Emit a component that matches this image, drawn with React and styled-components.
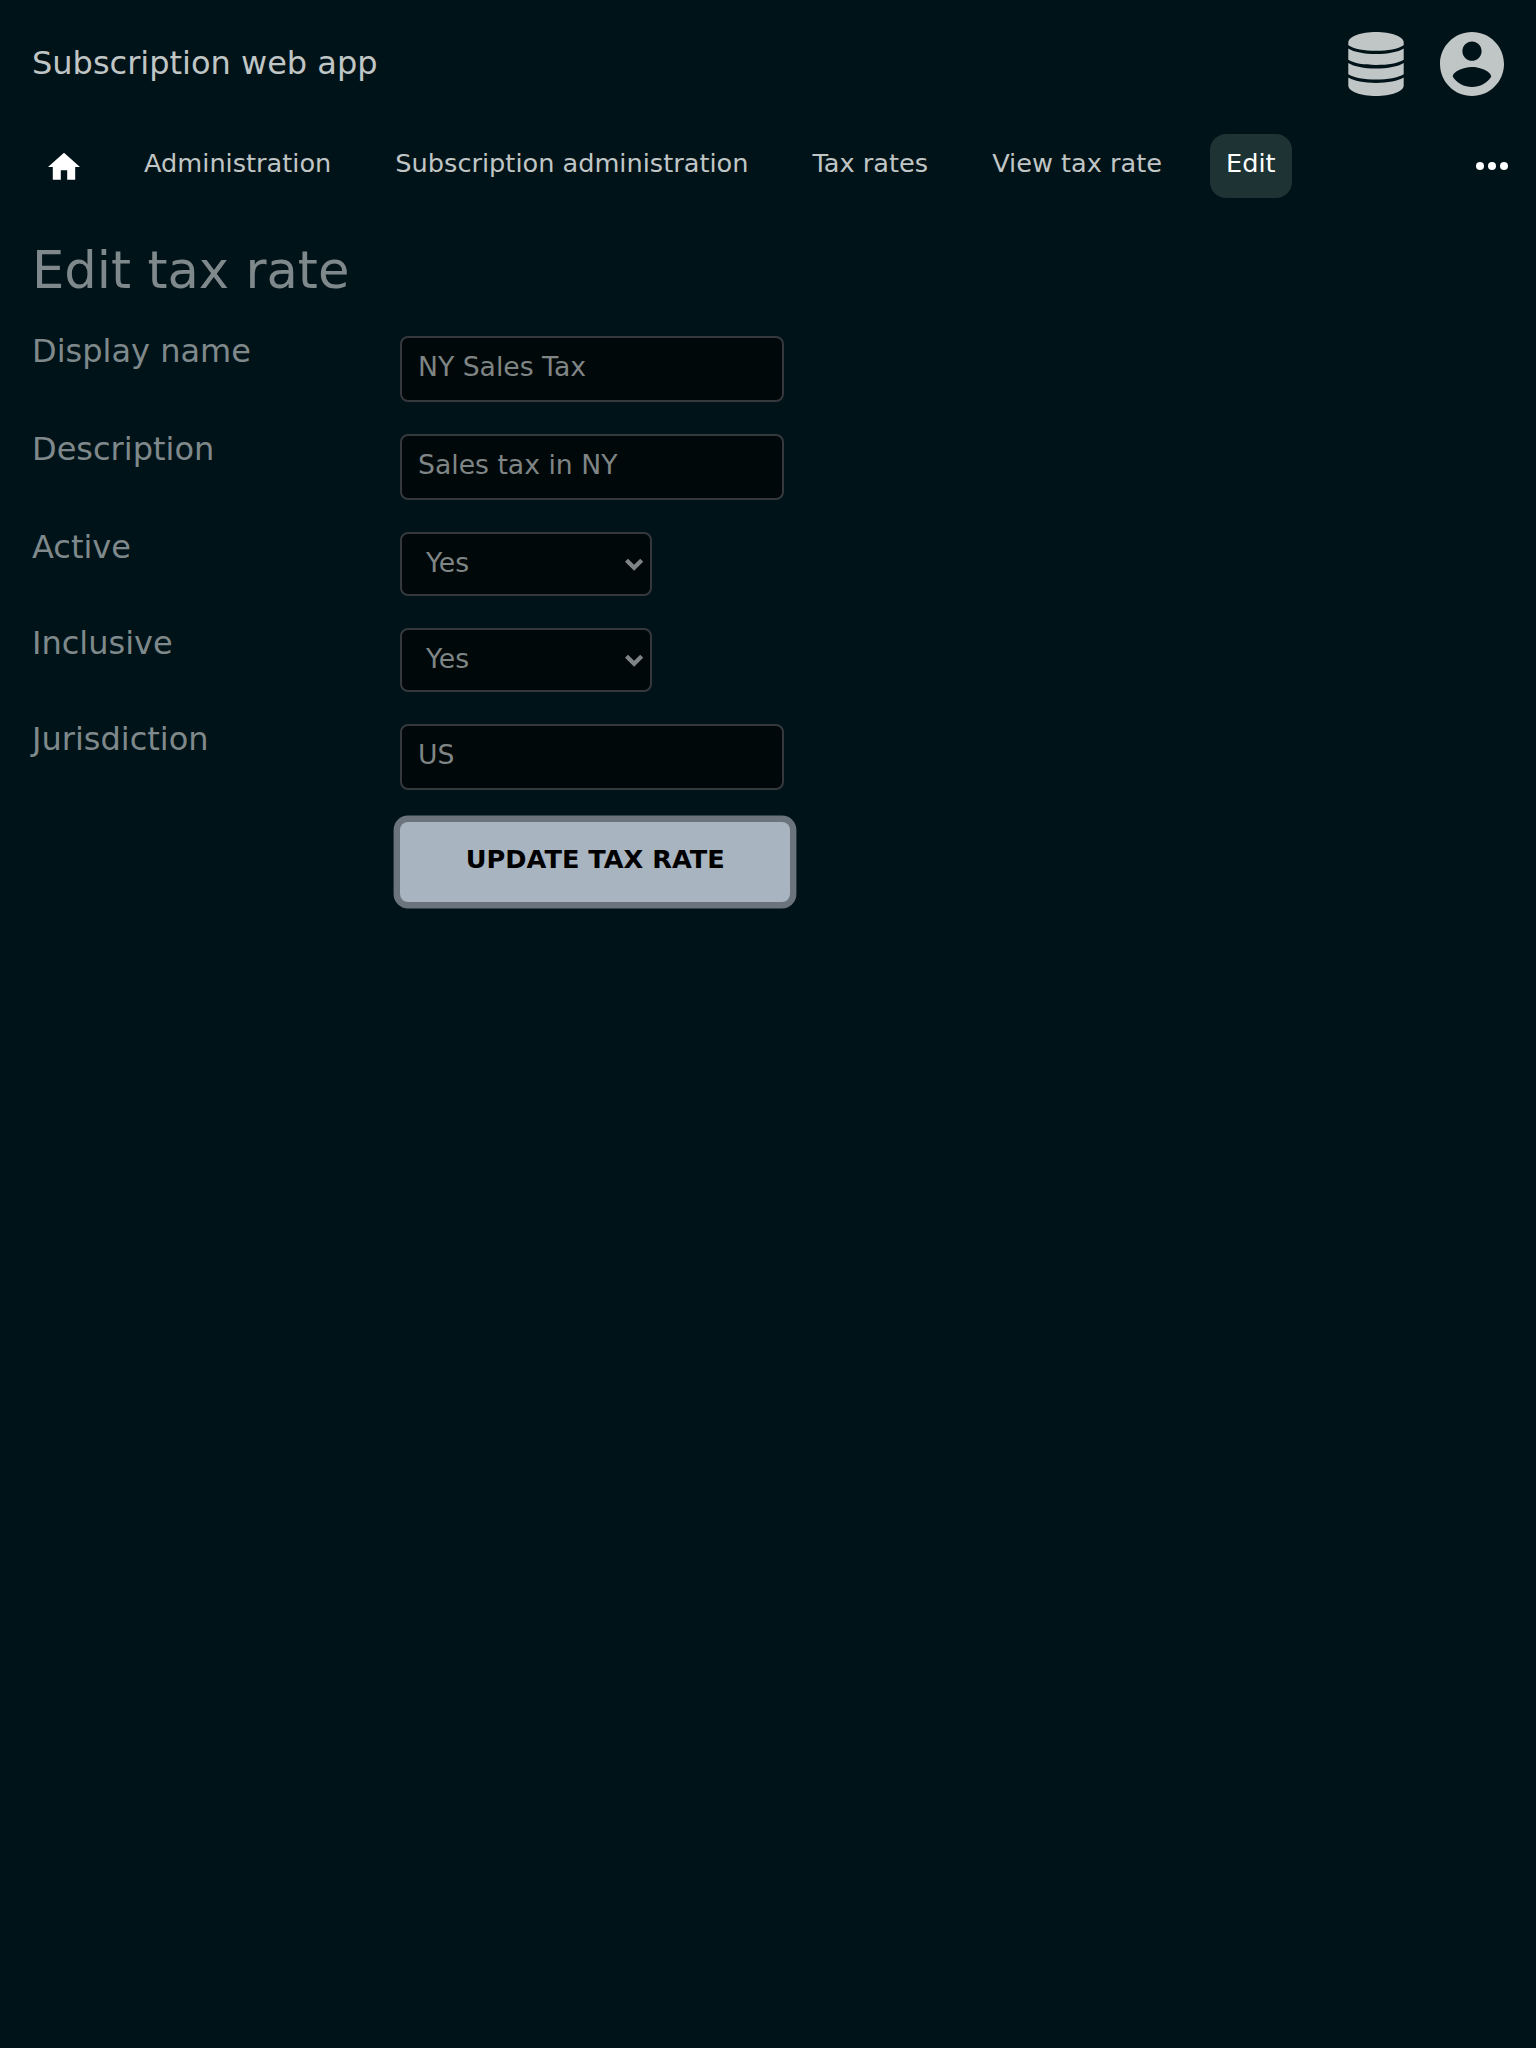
import React from "react";
import styled, { createGlobalStyle } from "styled-components";

const GlobalStyle = createGlobalStyle`
  * { box-sizing: border-box; }
  body {
    margin: 0;
    min-height: 2048px;
    background: #001318;
    font-family: "DejaVu Sans", sans-serif;
    font-size: 32px;
    line-height: 38px;
  }
`;

const Page = styled.div`
  display: flex;
  flex-direction: column;
`;

const Header = styled.header`
  display: flex;
  justify-content: space-between;
  align-items: flex-start;
  height: 134px;
  padding: 32px 32px 0;
  color: #c0c5c5;
`;

const AppTitle = styled.div`
  padding-top: 12px;
`;

const HeaderIcons = styled.div`
  display: flex;
  gap: 32px;
`;

const HeaderIcon = styled.svg`
  display: block;
  width: 64px;
  height: 64px;
  fill: #c0c5c5;
`;

const Nav = styled.nav`
  display: flex;
  gap: 32.04px;
  height: 64px;
  padding: 0 12px 0 32px;
  font-size: 25.6px;
  line-height: 30px;
`;

const NavItem = styled.a`
  height: 64px;
  padding: 14px 16px 0;
  border-radius: 16px;
  white-space: nowrap;
  color: ${(p) => (p.$active ? "#fff" : "#c0c5c5")};
  background: ${(p) => (p.$active ? "#1e3434" : "transparent")};
`;

const MoreItem = styled(NavItem)`
  margin-left: auto;
`;

const NavIcon = styled.svg`
  display: block;
  width: 32px;
  height: 36px;
  fill: #fff;
`;

const Main = styled.main`
  padding: 41px 32px 40px;
  color: #7f898b;
`;

const Heading = styled.h1`
  margin: 0 0 35px;
  font-size: 51.2px;
  line-height: 62px;
  font-weight: 400;
`;

const Form = styled.form`
  display: flex;
  flex-direction: column;
  gap: 32px;
`;

const Row = styled.div`
  display: grid;
  grid-template-columns: 368px auto;
  justify-content: start;
  align-items: start;
`;

const Label = styled.label`
  margin-top: -4px;
  height: 38px;
`;

const fieldText = `
  border: 2px solid #35393d;
  border-radius: 8px;
  background: #00080a;
  color: #7f8585;
  font-family: "DejaVu Sans", sans-serif;
  font-size: 26.667px;
  line-height: 32px;
`;

const Input = styled.input`
  ${fieldText}
  width: 384px;
  height: 66px;
  padding: 0 16px 6px;
  outline: none;
`;

const SelectBox = styled.div`
  ${fieldText}
  display: flex;
  justify-content: space-between;
  width: 252px;
  height: 64px;
  padding: 13px 6px 0 24px;
`;

const Chevron = styled.svg`
  width: 21px;
  height: 14px;
  margin-top: 11px;
  fill: none;
  stroke: #7f8585;
  stroke-width: 4.3;
`;

const SubmitButton = styled.button`
  width: 390px;
  height: 80px;
  margin-left: 368px;
  padding: 0 0 6px 0.5px;
  border: 0;
  border-radius: 8px;
  background: #a8b4c0;
  box-shadow: 0 0 0 6.4px #6b747d;
  color: #000;
  font-family: "DejaVu Sans", sans-serif;
  font-size: 25.6px;
  font-weight: 700;
`;

const Select = ({ value }) => (
  <SelectBox>
    <span>{value}</span>
    <Chevron viewBox="0 0 21 14"><path d="M3.5 2.3 L11.1 9.7 L18.7 2.3" /></Chevron>
  </SelectBox>
);

const fields = [
  { label: "Display name", value: "NY Sales Tax" },
  { label: "Description", value: "Sales tax in NY" },
  { label: "Active", value: "Yes", select: true },
  { label: "Inclusive", value: "Yes", select: true },
  { label: "Jurisdiction", value: "US" },
];

const links = ["Administration", "Subscription administration", "Tax rates", "View tax rate"];

export default function App() {
  return (
    <Page>
      <GlobalStyle />
      <Header>
        <AppTitle>Subscription web app</AppTitle>
        <HeaderIcons>
          <HeaderIcon viewBox="0 0 64 64">
            <path d="M4.3 10.5C4.3 4.5 17 0 32 0S59.7 4.5 59.7 10.5V13.2C54 17 44 18.8 32 18.8S10 17 4.3 13.2Z" />
            <path d="M4.3 16.6C10 20.2 20 22.1 32 22.1S54 20.2 59.7 16.6V27.8C54 31.3 44 33 32 33S10 31.3 4.3 27.8Z" />
            <path d="M4.3 31.1C10 34.7 20 36.6 32 36.6S54 34.7 59.7 31.1V42.2C54 45.7 44 47.5 32 47.5S10 45.7 4.3 42.2Z" />
            <path d="M4.3 45.5C10 49 20 50.9 32 50.9S54 49 59.7 45.5V53.5C59.7 59.5 47 64 32 64S4.3 59.5 4.3 53.5Z" />
          </HeaderIcon>
          <HeaderIcon viewBox="2 2 20 20">
            <path d="M12 2C6.48 2 2 6.48 2 12s4.48 10 10 10 10-4.48 10-10S17.52 2 12 2zm0 3c1.66 0 3 1.34 3 3s-1.34 3-3 3-3-1.34-3-3 1.34-3 3-3zm0 14.2c-2.5 0-4.71-1.28-6-3.22.03-1.99 4-3.08 6-3.08 1.99 0 5.97 1.09 6 3.08-1.29 1.94-3.5 3.22-6 3.22z" />
          </HeaderIcon>
        </HeaderIcons>
      </Header>
      <Nav>
        <NavItem>
          <NavIcon viewBox="2 0.1 20 22.5">
            <path d="M10 20v-6h4v6h5v-8h3L12 3 2 12h3v8z" />
          </NavIcon>
        </NavItem>
        {links.map((l) => <NavItem key={l}>{l}</NavItem>)}
        <NavItem $active>Edit</NavItem>
        <MoreItem>
          <NavIcon viewBox="0 0 32 36">
            <circle cx="4" cy="18" r="4" />
            <circle cx="16" cy="18" r="4" />
            <circle cx="28" cy="18" r="4" />
          </NavIcon>
        </MoreItem>
      </Nav>
      <Main>
        <Heading>Edit tax rate</Heading>
        <Form onSubmit={(e) => e.preventDefault()}>
          {fields.map((f) => (
            <Row key={f.label}>
              <Label>{f.label}</Label>
              {f.select ? <Select value={f.value} /> : <Input defaultValue={f.value} />}
            </Row>
          ))}
          <SubmitButton>UPDATE TAX RATE</SubmitButton>
        </Form>
      </Main>
    </Page>
  );
}
